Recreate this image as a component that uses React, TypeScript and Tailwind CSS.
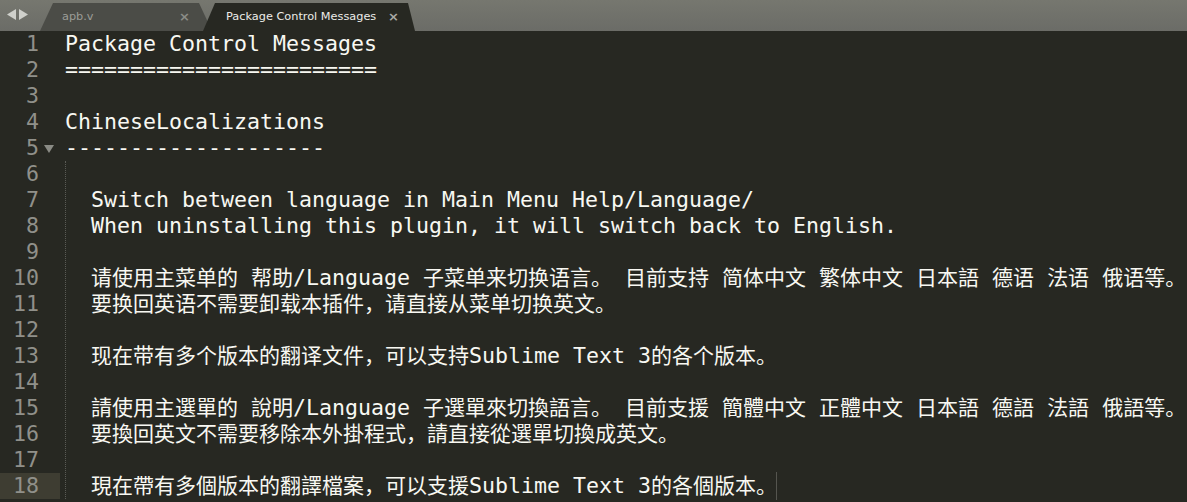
const CJK = /([\u3000-\u303f\u3400-\u9fff\uff00-\uffef]+)/

const lines: string[] = [
  'Package Control Messages',
  '========================',
  '',
  'ChineseLocalizations',
  '--------------------',
  '',
  'Switch between language in Main Menu Help/Language/',
  'When uninstalling this plugin, it will switch back to English.',
  '',
  '请使用主菜单的 帮助/Language 子菜单来切换语言。 目前支持 简体中文 繁体中文 日本語 德语 法语 俄语等。',
  '要换回英语不需要卸载本插件，请直接从菜单切换英文。',
  '',
  '现在带有多个版本的翻译文件，可以支持Sublime Text 3的各个版本。',
  '',
  '請使用主選單的 說明/Language 子選單來切換語言。 目前支援 簡體中文 正體中文 日本語 德語 法語 俄語等。',
  '要換回英文不需要移除本外掛程式，請直接從選單切換成英文。',
  '',
  '現在帶有多個版本的翻譯檔案，可以支援Sublime Text 3的各個版本。',
]

const Text = ({ value }: { value: string }) => (
  <>
    {value.split(CJK).map((part, i) =>
      CJK.test(part) ? (
        <span key={i} className="text-[21px] leading-[22px] font-['Noto_Sans_CJK_SC',sans-serif]">
          {part}
        </span>
      ) : (
        <span key={i}>{part}</span>
      )
    )}
  </>
)

const Line = ({ value, cursor }: { value: string; cursor?: boolean }) => (
  <div className="h-[26px] leading-[26px] whitespace-pre flex items-center">
    <span>
      <Text value={value} />
    </span>
    {cursor && <span className="-ml-px h-[28px] w-px bg-[#55554f]" />}
  </div>
)

const TabBar = () => (
  <div className="flex h-[31px] items-end bg-[linear-gradient(#76776f,#6b6c67)] font-['DejaVu_Sans',sans-serif] text-[11.3px]">
    <div className="flex h-full w-[40px] items-center gap-[3px] pl-[7px] pb-[2px]">
      <svg width="9" height="11" viewBox="0 0 9 11">
        <polygon points="9,0 9,11 0,5.5" fill="#cfd0cb" />
      </svg>
      <svg width="9" height="11" viewBox="0 0 9 11">
        <polygon points="0,0 0,11 9,5.5" fill="#cfd0cb" />
      </svg>
    </div>
    <div className="flex h-[28px] w-[172px] items-center justify-between bg-[#4b4c47] pl-[22px] pr-[22px] [clip-path:polygon(13px_0,calc(100%-13px)_0,100%_100%,0_100%)]">
      <span className="text-[#9b9c97]">apb.v</span>
      <span className="text-[13px] font-bold text-[#8b8c87]">×</span>
    </div>
    <div className="relative -ml-[9px] flex h-[28px] w-[212px] items-center justify-between bg-[#272822] pl-[23px] pr-[16px] [clip-path:polygon(12px_0,calc(100%-7px)_0,100%_100%,0_100%)]">
      <span className="text-[#ecece8]">Package Control Messages</span>
      <span className="text-[13px] font-bold text-[#a9aaa5]">×</span>
    </div>
  </div>
)

export default function App() {
  return (
    <div className="h-[502px] w-[1187px] overflow-hidden bg-[#272822]">
      <TabBar />
      <div className="flex font-['DejaVu_Sans_Mono',monospace] text-[21.6px] text-[#f8f8f2]">
        <div className="w-[60px] shrink-0 text-[#90908a]">
          {lines.map((_, i) => (
            <div
              key={i}
              className={
                i === 17
                  ? 'relative h-[26px] bg-[#3e3d32] pr-[21px] text-right leading-[26px]'
                  : 'relative h-[26px] pr-[21px] text-right leading-[26px]'
              }
            >
              {i + 1}
              {i === 4 && (
                <svg
                  className="absolute left-[44px] top-[10px]"
                  width="10"
                  height="8"
                  viewBox="0 0 10 8"
                >
                  <polygon points="0,0 10,0 5,8" fill="#8a8b85" />
                </svg>
              )}
            </div>
          ))}
        </div>
        <div className="flex-1 pl-[5px]">
          {lines.slice(0, 5).map((l, i) => (
            <Line key={i} value={l} />
          ))}
          <div className="border-l border-dotted border-[#5a5b55] pl-[25px]">
            {lines.slice(5).map((l, i) => (
              <Line key={i} value={l} cursor={i === 12} />
            ))}
          </div>
        </div>
      </div>
    </div>
  )
}
